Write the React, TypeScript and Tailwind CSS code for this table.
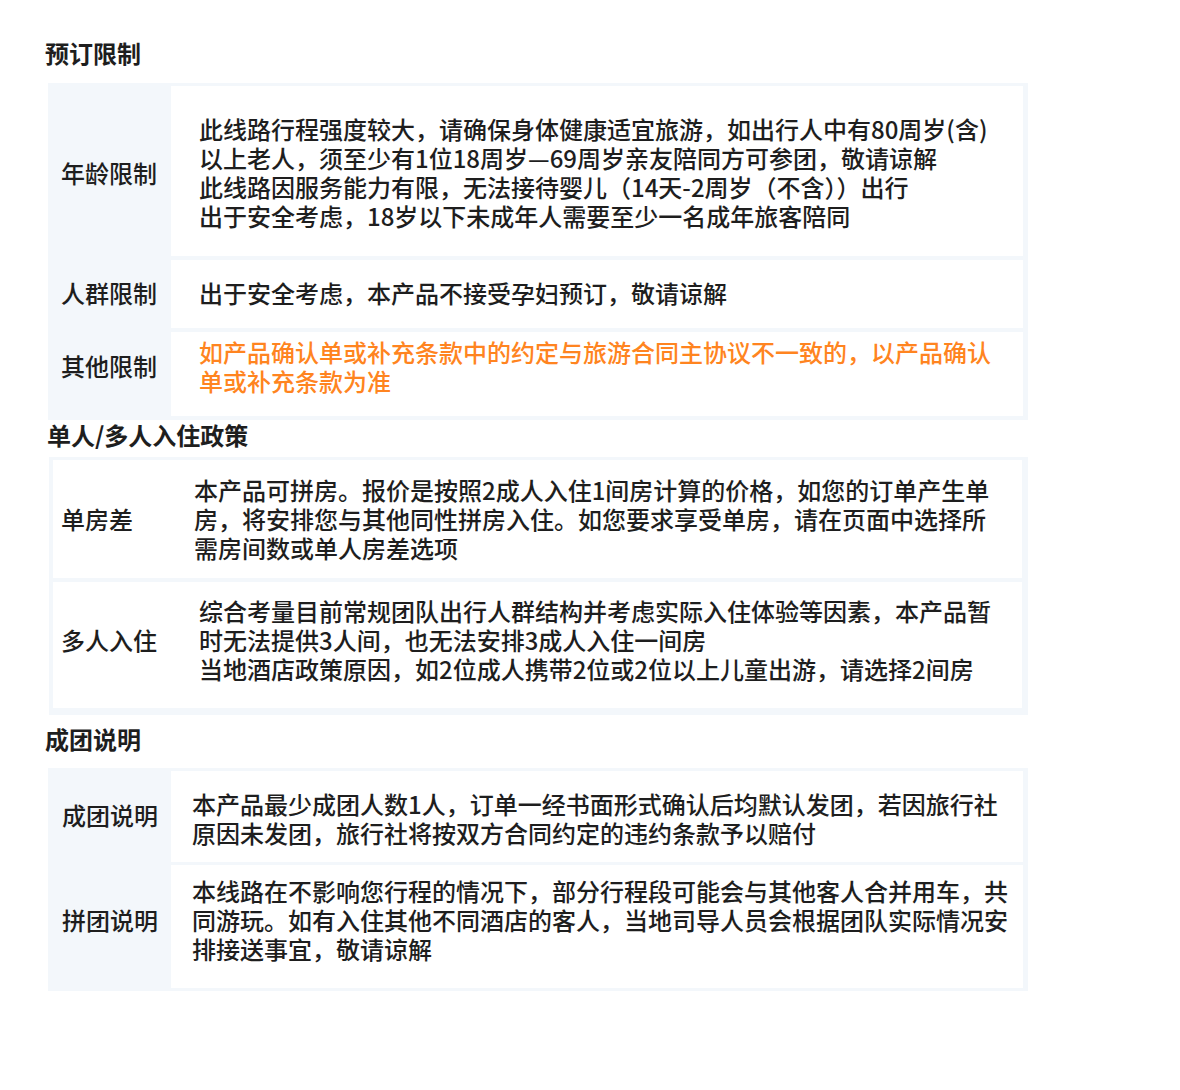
const ageLines = [
  "此线路行程强度较大，请确保身体健康适宜旅游，如出行人中有80周岁(含)",
  "以上老人，须至少有1位18周岁—69周岁亲友陪同方可参团，敬请谅解",
  "此线路因服务能力有限，无法接待婴儿（14天-2周岁（不含））出行",
  "出于安全考虑，18岁以下未成年人需要至少一名成年旅客陪同",
];

const otherLines = [
  "如产品确认单或补充条款中的约定与旅游合同主协议不一致的，以产品确认",
  "单或补充条款为准",
];

const singleRoomLines = [
  "本产品可拼房。报价是按照2成人入住1间房计算的价格，如您的订单产生单",
  "房，将安排您与其他同性拼房入住。如您要求享受单房，请在页面中选择所",
  "需房间数或单人房差选项",
];

const multiLines = [
  "综合考量目前常规团队出行人群结构并考虑实际入住体验等因素，本产品暂",
  "时无法提供3人间，也无法安排3成人入住一间房",
  "当地酒店政策原因，如2位成人携带2位或2位以上儿童出游，请选择2间房",
];

const groupLines = [
  "本产品最少成团人数1人，订单一经书面形式确认后均默认发团，若因旅行社",
  "原因未发团，旅行社将按双方合同约定的违约条款予以赔付",
];

const joinLines = [
  "本线路在不影响您行程的情况下，部分行程段可能会与其他客人合并用车，共",
  "同游玩。如有入住其他不同酒店的客人，当地司导人员会根据团队实际情况安",
  "排接送事宜，敬请谅解",
];

function Lines({ lines, orange = false }: { lines: string[]; orange?: boolean }) {
  return (
    <div className={orange ? "text-[#ff8420]" : ""}>
      {lines.map((line) => (
        <div key={line} className="whitespace-nowrap">
          {line}
        </div>
      ))}
    </div>
  );
}

export default function App() {
  return (
    <div className="min-h-[1090px] w-[1180px] bg-white pt-[38px] font-['Noto_Sans_CJK_SC','Noto_Sans',sans-serif] text-[24px] font-medium leading-[29px] text-[#1e1e1e]">
      <h2 className="ml-[45px] font-bold">预订限制</h2>

      <div className="ml-[48px] mt-[16px] flex w-[980px] flex-col gap-[4px] bg-[#f3f7fb] pb-[4px] pr-[5px] pt-[3px]">
        <div className="flex h-[170px]">
          <div className="flex w-[123px] items-center pl-[13px] pt-[2px]">年龄限制</div>
          <div className="flex-1 bg-white pl-[28px] pt-[28px]">
            <Lines lines={ageLines} />
          </div>
        </div>
        <div className="flex h-[68px]">
          <div className="flex w-[123px] items-center pb-[4px] pl-[13px]">人群限制</div>
          <div className="flex-1 bg-white pl-[28px] pt-[18px]">
            出于安全考虑，本产品不接受孕妇预订，敬请谅解
          </div>
        </div>
        <div className="flex h-[84px]">
          <div className="flex w-[123px] items-center pb-[18px] pl-[13px]">其他限制</div>
          <div className="flex-1 bg-white pl-[28px] pt-[5px]">
            <Lines lines={otherLines} orange />
          </div>
        </div>
      </div>

      <h2 className="ml-[47px] font-bold">单人/多人入住政策</h2>

      <div className="ml-[49px] mt-[8px] flex w-[979px] flex-col gap-[4px] bg-[#f3f7fb] pb-[7px] pl-[4px] pr-[6px] pt-[3px]">
        <div className="flex h-[118px] bg-white">
          <div className="flex w-[141px] items-center pb-[2px] pl-[8px]">单房差</div>
          <div className="flex-1 pt-[15px]">
            <Lines lines={singleRoomLines} />
          </div>
        </div>
        <div className="flex h-[126px] bg-white">
          <div className="flex w-[146px] items-center pb-[12px] pl-[8px]">多人入住</div>
          <div className="flex-1 pt-[14px]">
            <Lines lines={multiLines} />
          </div>
        </div>
      </div>

      <h2 className="ml-[45px] mt-[9px] font-bold">成团说明</h2>

      <div className="ml-[48px] mt-[15px] flex w-[980px] flex-col gap-[3px] bg-[#f3f7fb] pb-[3px] pr-[5px] pt-[3px]">
        <div className="flex h-[91px]">
          <div className="flex w-[123px] items-center pb-[4px] pl-[14px]">成团说明</div>
          <div className="flex-1 bg-white pl-[21px] pt-[18px]">
            <Lines lines={groupLines} />
          </div>
        </div>
        <div className="flex h-[123px]">
          <div className="flex w-[123px] items-center pb-[15px] pl-[14px]">拼团说明</div>
          <div className="flex-1 bg-white pl-[21px] pt-[11px]">
            <Lines lines={joinLines} />
          </div>
        </div>
      </div>
    </div>
  );
}
